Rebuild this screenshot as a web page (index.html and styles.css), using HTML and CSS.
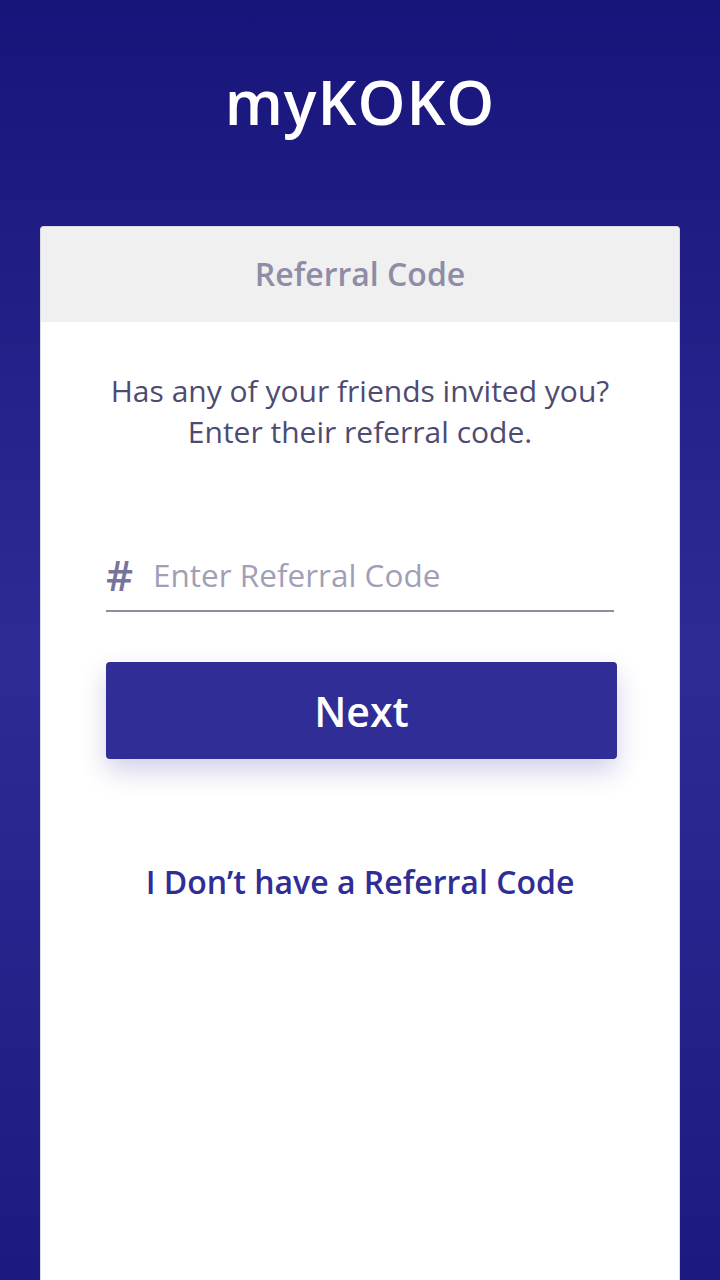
FILE: index.html
```html
<!DOCTYPE html>
<html lang="en">
<head>
<meta charset="utf-8">
<title>myKOKO – Referral Code</title>
<link rel="stylesheet" href="styles.css">
</head>
<body>
<div class="screen">
  <header class="brand">
    <h1 class="brand-title">myKOKO</h1>
  </header>
  <main class="card">
    <div class="card-head">Referral Code</div>
    <div class="card-body">
      <p class="intro">Has any of your friends invited you?<br>Enter their referral code.</p>
      <label class="field">
        <span class="field-icon">#</span>
        <input class="field-input" type="text" placeholder="Enter Referral Code">
      </label>
      <button class="btn-next" type="button">Next</button>
      <a class="skip-link" href="#">I Don’t have a Referral Code</a>
    </div>
  </main>
</div>
</body>
</html>
```

FILE: styles.css
```css
* { box-sizing: border-box; }
html, body { margin: 0; padding: 0; }
body {
  width: 720px;
  height: 1280px;
  overflow: hidden;
  font-family: "Open Sans", "Noto Sans", sans-serif;
  background: linear-gradient(180deg, #17147a 0%, #2f2b96 51%, #1c1a80 100%);
}
.screen {
  display: flex;
  flex-direction: column;
  height: 1280px;
}
.brand {
  height: 226px;
  display: flex;
  justify-content: center;
  padding-top: 62px;
}
.brand-title {
  margin: 0;
  color: #ffffff;
  font-size: 61px;
  font-weight: 600;
  line-height: 80px;
  letter-spacing: 1px;
  height: 80px;
}
.card {
  flex: 1;
  margin: 0 40px;
  background: #ffffff;
  border: 1px solid #d9d9e3;
  border-bottom: none;
  border-radius: 4px 4px 0 0;
  display: flex;
  flex-direction: column;
  overflow: hidden;
}
.card-head {
  height: 95px;
  background: #f0f0f0;
  color: #8e8ca6;
  font-size: 32px;
  font-weight: 600;
  display: flex;
  align-items: center;
  justify-content: center;
  padding-bottom: 2px;
}
.card-body {
  display: flex;
  flex-direction: column;
  align-items: center;
  padding: 48px 65px 0;
}
.intro {
  margin: 0;
  color: #4d4b72;
  font-size: 30px;
  line-height: 41px;
  text-align: center;
  white-space: nowrap;
}
.field {
  margin-top: 92px;
  width: 100%;
  display: flex;
  align-items: center;
  border-bottom: 2px solid #8e8ca6;
  height: 68px;
  padding-bottom: 6px;
}
.field-icon {
  width: 47px;
  color: #76749a;
  font-size: 42px;
  font-weight: 600;
  line-height: 1;
  padding-top: 2px;
}
.field-input {
  flex: 1;
  border: none;
  outline: none;
  background: transparent;
  font-family: inherit;
  font-size: 31.5px;
  color: #4d4b72;
  padding: 0;
}
.field-input::placeholder { color: #a19fb7; opacity: 1; }
.btn-next {
  margin-top: 50px;
  width: 511px;
  height: 97px;
  border: none;
  border-radius: 4px;
  background: #302d96;
  color: #ffffff;
  font-family: inherit;
  font-size: 41px;
  font-weight: 600;
  box-shadow: 0 12px 26px rgba(48, 45, 150, 0.22), 0 0 0 1px rgba(255,255,255,0.6);
  align-self: flex-start;
}
.skip-link {
  margin-top: 101px;
  color: #302d96;
  font-size: 32px;
  font-weight: 600;
  text-decoration: none;
}
```
